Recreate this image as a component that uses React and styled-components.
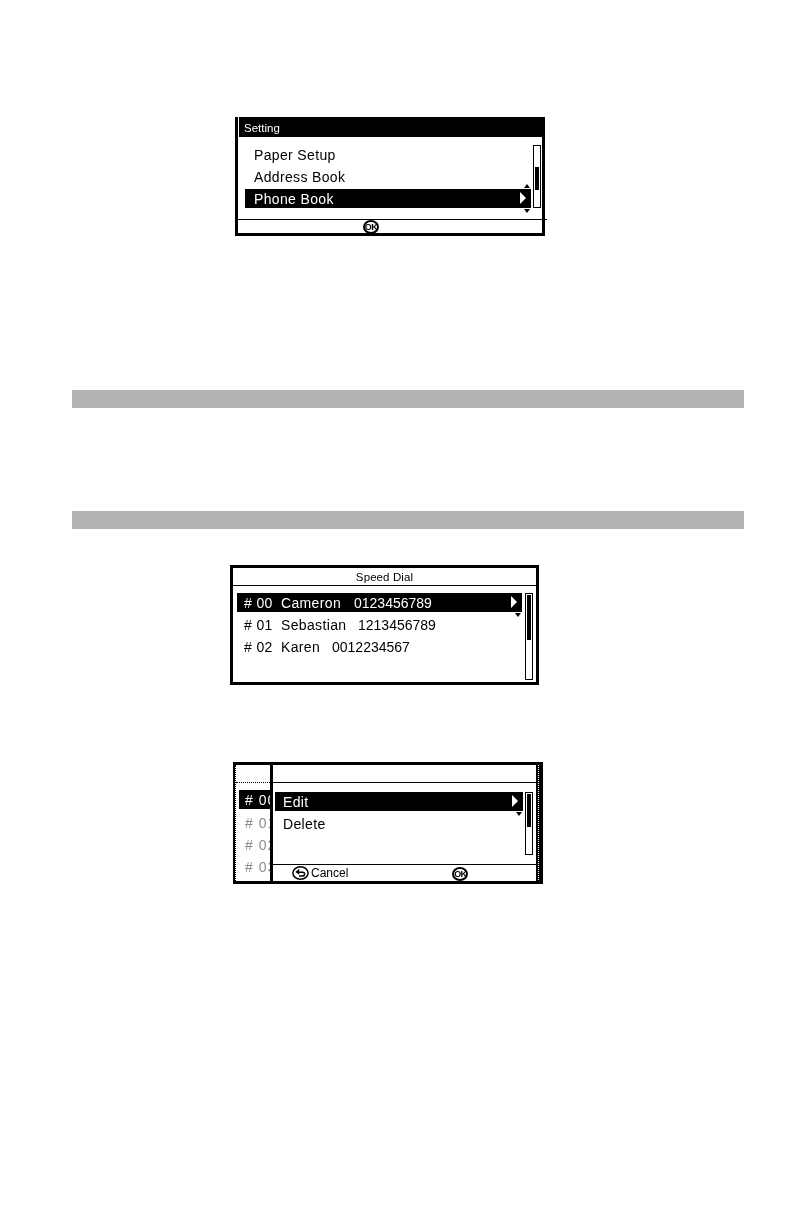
import styled, { createGlobalStyle } from "styled-components";

const GlobalStyle = createGlobalStyle`
    html, body {
        margin: 0;
        padding: 0;
        background: #fff;
    }
`;

const Page = styled.div`
    width: 792px;
    height: 1224px;
    box-sizing: border-box;
    padding-top: 117px;
    font-family: "Liberation Sans", sans-serif;
    color: #000;
    will-change: transform;
`;

const Screen = styled.div`
    box-sizing: border-box;
    display: flex;
    flex-direction: column;
    width: ${(p) => p.$width}px;
    height: ${(p) => p.$height}px;
    margin: ${(p) => p.$margin};
    border: 3px solid #000;
`;

const SettingScreen = styled(Screen)`
    border-top: none;
`;

const TitleBar = styled.div`
    flex: none;
    height: 20px;
    margin: 0 -2px 0 0;
    padding-left: 5px;
    border-left: 1px solid #fff;
    background: #000;
    color: #fff;
    font-size: 11.5px;
    line-height: 23px;
`;

const CenterTitle = styled.div`
    flex: none;
    height: 17px;
    border-bottom: 1px solid #000;
    text-align: center;
    font-size: 11.5px;
    line-height: 19px;
    letter-spacing: 0.1px;
`;

const Body = styled.div`
    flex: 1;
    display: flex;
    gap: ${(p) => p.$gap}px;
    padding: ${(p) => p.$padding};
    min-height: 0;
`;

const List = styled.div`
    flex: 1;
    display: flex;
    flex-direction: column;
    gap: 3px;
`;

const Row = styled.div`
    position: relative;
    display: flex;
    align-items: center;
    height: 19px;
    padding: 1px 0 0 ${(p) => p.$indent}px;
    box-sizing: border-box;
    font-size: 14px;
    letter-spacing: 0.35px;
    white-space: pre;
    background: ${(p) => (p.$selected ? "#000" : "transparent")};
    color: ${(p) => (p.$selected ? "#fff" : "#000")};
`;

const Cell = styled.span`
    flex: none;
    width: ${(p) => p.$width}px;
`;

const PhoneNumber = styled.span`
    letter-spacing: 0;
`;

const Chevron = styled.span`
    position: absolute;
    right: 5px;
    top: 3px;
    width: 0;
    height: 0;
    border-style: solid;
    border-width: 6.5px 0 6.5px 6px;
    border-color: transparent transparent transparent #fff;
`;

const Tick = styled.span`
    position: absolute;
    right: 1px;
    width: 0;
    height: 0;
    border-style: solid;
    border-color: transparent;
    border-width: 4px 3.5px;
    ${(p) =>
        p.$up
            ? "top: -5px; border-top-width: 0; border-bottom-color: #000;"
            : "bottom: -5px; border-bottom-width: 0; border-top-color: #000;"}
`;

const Scroll = styled.div`
    flex: none;
    box-sizing: border-box;
    width: 8px;
    padding: ${(p) => p.$thumbTop}px 1px 0;
    border: 1px solid #000;
`;

const Thumb = styled.div`
    height: ${(p) => p.$size}px;
    background: #000;
`;

const Footer = styled.div`
    flex: none;
    display: flex;
    align-items: flex-start;
    height: ${(p) => p.$height}px;
    margin-right: ${(p) => p.$overhang || 0}px;
    border-top: 1px solid #000;
    overflow: hidden;
    font-size: 12px;
`;

const OkBadge = styled.span`
    display: inline-flex;
    flex: none;
    align-items: center;
    justify-content: center;
    box-sizing: border-box;
    width: 16px;
    height: 14px;
    margin: ${(p) => p.$top}px 0 0 ${(p) => p.$left}px;
    border: 2px solid #000;
    border-radius: 50%;
    font-size: 9px;
    font-weight: 700;
    letter-spacing: -0.6px;
`;

const CancelLabel = styled.span`
    display: flex;
    align-items: center;
    gap: 2px;
    margin: 1px 0 0 19px;
`;

const Band = styled.div`
    height: 18px;
    margin: ${(p) => p.$margin};
    background: #b3b3b3;
`;

const MenuScreen = styled(Screen)`
    flex-direction: row;
    border-width: 3px 3px 3px 2px;
`;

const Behind = styled.div`
    flex: none;
    box-sizing: border-box;
    width: 38px;
    display: flex;
    flex-direction: column;
    overflow: hidden;
    border-left: 1px dotted #000;
    border-right: 3px solid #000;
    font-size: 14px;
    letter-spacing: 1px;
`;

const BehindTitle = styled.div`
    flex: none;
    height: 17px;
    border-bottom: 1px dotted #000;
`;

const BehindRow = styled.div`
    flex: none;
    margin: ${(p) => (p.$first ? "7px 0 3px 3px" : "0 0 3px 3px")};
    height: 19px;
    line-height: ${(p) => (p.$first ? 20 : 22)}px;
    padding-left: 6px;
    white-space: pre;
    background: ${(p) => (p.$selected ? "#000" : "transparent")};
    color: ${(p) => (p.$selected ? "#fff" : "#8c8c8c")};
`;

const MenuPane = styled.div`
    position: relative;
    flex: 1;
    display: flex;
    flex-direction: column;
    min-width: 0;
    border-right: 4px solid #000;

    &::after {
        content: "";
        position: absolute;
        top: 0;
        bottom: 0;
        right: -3px;
        width: 1px;
        background: repeating-linear-gradient(#fff 0 1px, #000 1px 2px);
    }
`;

const BlankTitle = styled.div`
    flex: none;
    height: 17px;
    border-bottom: 1px solid #000;
`;

const BackIcon = () => (
    <svg width="17" height="14" viewBox="0 0 17 14">
        <ellipse cx="8.5" cy="7" rx="7.6" ry="6.2" fill="none" stroke="#000" strokeWidth="1.5" />
        <path d="M7.2 2.8 3.4 5.9 7.2 8.8V7h3.2c1 0 1.5.4 1.5 1.1s-.5 1.1-1.5 1.1H7v1.6h3.6c1.8 0 2.8-1.1 2.8-2.7s-1-2.6-2.8-2.6H7.2z" fill="#000" />
    </svg>
);

const App = () => {
    return (
        <Page>
            <GlobalStyle />

            <SettingScreen $width={310} $height={119} $margin="0 0 0 235px">
                <TitleBar>Setting</TitleBar>
                <Body $gap={2} $padding="8px 1px 11px 7px">
                    <List>
                        <Row $indent={9}>Paper Setup</Row>
                        <Row $indent={9}>Address Book</Row>
                        <Row $indent={9} $selected>
                            Phone Book
                            <Chevron />
                            <Tick $up />
                            <Tick />
                        </Row>
                    </List>
                    <Scroll $thumbTop={21}>
                        <Thumb $size={23} />
                    </Scroll>
                </Body>
                <Footer $height={13} $overhang={-5}>
                    <OkBadge $left={125} $top={0}>OK</OkBadge>
                </Footer>
            </SettingScreen>

            <Band $margin="154px 48px 0 72px" />
            <Band $margin="103px 48px 0 72px" />

            <Screen $width={309} $height={120} $margin="36px 0 0 230px">
                <CenterTitle>Speed Dial</CenterTitle>
                <Body $gap={3} $padding="7px 3px 2px 4px">
                    <List>
                        <Row $indent={7} $selected>
                            <Cell $width={37}># 00</Cell>
                            <Cell $width={73}>Cameron</Cell>
                            <PhoneNumber>0123456789</PhoneNumber>
                            <Chevron />
                            <Tick />
                        </Row>
                        <Row $indent={7}>
                            <Cell $width={37}># 01</Cell>
                            <Cell $width={77}>Sebastian</Cell>
                            <PhoneNumber>1213456789</PhoneNumber>
                        </Row>
                        <Row $indent={7}>
                            <Cell $width={37}># 02</Cell>
                            <Cell $width={51}>Karen</Cell>
                            <PhoneNumber>0012234567</PhoneNumber>
                        </Row>
                    </List>
                    <Scroll $thumbTop={1}>
                        <Thumb $size={45} />
                    </Scroll>
                </Body>
            </Screen>

            <MenuScreen $width={310} $height={122} $margin="77px 0 0 233px">
                <Behind>
                    <BehindTitle />
                    <BehindRow $first $selected>
                        # 00
                    </BehindRow>
                    <BehindRow># 01</BehindRow>
                    <BehindRow># 02</BehindRow>
                    <BehindRow># 03</BehindRow>
                </Behind>
                <MenuPane>
                    <BlankTitle />
                    <Body $gap={2} $padding="9px 3px 9px 2px">
                        <List>
                            <Row $indent={8} $selected>
                                Edit
                                <Chevron />
                                <Tick />
                            </Row>
                            <Row $indent={8}>Delete</Row>
                        </List>
                        <Scroll $thumbTop={1}>
                            <Thumb $size={33} />
                        </Scroll>
                    </Body>
                    <Footer $height={16}>
                        <CancelLabel>
                            <BackIcon />
                            Cancel
                        </CancelLabel>
                        <OkBadge $left={104} $top={2}>OK</OkBadge>
                    </Footer>
                </MenuPane>
            </MenuScreen>
        </Page>
    );
};

export default App;
